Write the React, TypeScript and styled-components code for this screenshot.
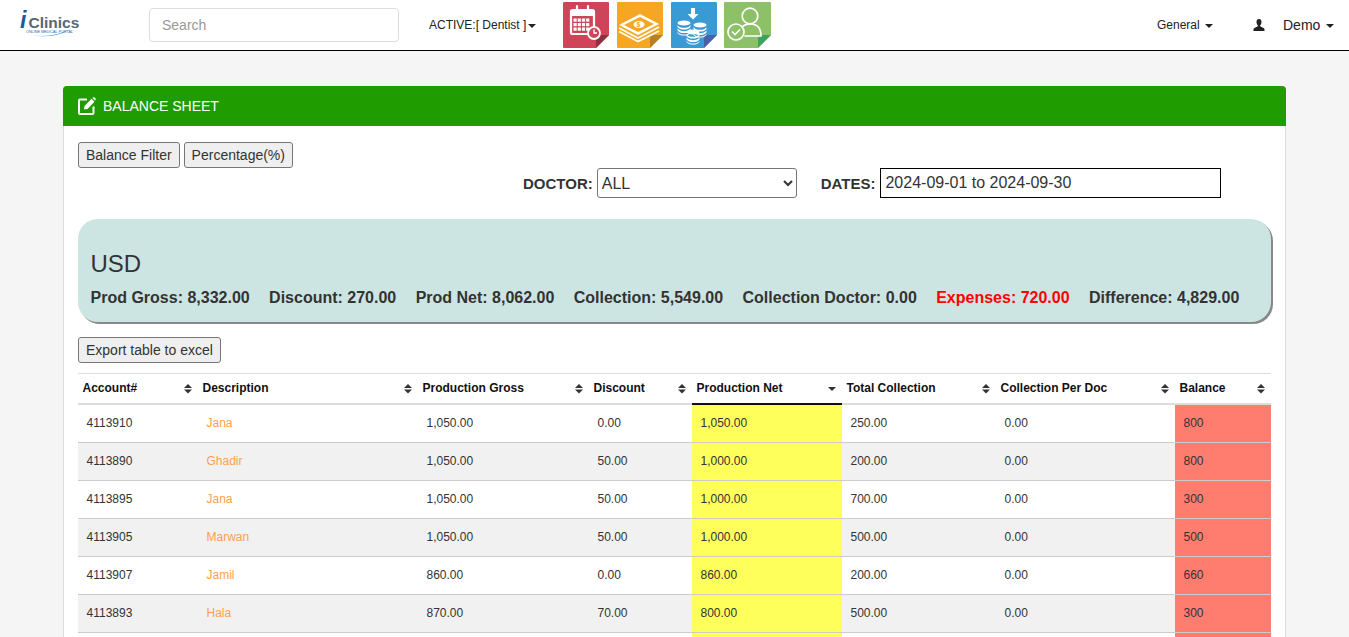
import styled, { createGlobalStyle } from "styled-components";

const GlobalStyle = createGlobalStyle`
  html, body {
    margin: 0;
    height: 100%;
    overflow: hidden;
    background: #f5f5f5;
    font-family: "Liberation Sans", Arial, sans-serif;
    font-size: 14px;
    color: #333;
  }
`;

const Page = styled.div`
  height: 637px;
  overflow: hidden;
`;

const NavBar = styled.nav`
  height: 50px;
  background: #fff;
  border-bottom: 1px solid #000;
  display: flex;
  align-items: center;
`;

const LogoWrap = styled.a`
  width: 149px;
  height: 50px;
  flex: none;
  display: block;
  padding: 8px 0 0 19px;
  box-sizing: border-box;
`;

const Search = styled.input`
  width: 250px;
  height: 34px;
  box-sizing: border-box;
  padding: 6px 12px;
  border: 1px solid #ddd;
  border-radius: 4px;
  font: 14px "Liberation Sans", Arial, sans-serif;
  color: #555;
  background: #fff;

  &::placeholder {
    color: #999;
    opacity: 1;
  }
`;

const ActiveMenu = styled.a`
  margin-left: 30px;
  width: 133px;
  flex: none;
  font-size: 12px;
  color: #222;
  white-space: nowrap;
`;

const Caret = styled.span`
  display: inline-block;
  margin-left: 2px;
  vertical-align: middle;
  border-top: 4px solid #222;
  border-left: 4px solid transparent;
  border-right: 4px solid transparent;
`;

const Tiles = styled.div`
  display: flex;
  align-items: center;
  gap: 7px;
  height: 50px;
  padding-bottom: 1px;
  box-sizing: border-box;
  flex: 1;

  > svg:last-child {
    margin-left: -1px;
  }
`;

const UserMenus = styled.div`
  display: flex;
  align-items: center;
`;

const GeneralLink = styled.a`
  font-size: 12px;
  color: #222;
  width: 96px;
`;

const DemoLink = styled.a`
  display: flex;
  align-items: center;
  width: 96px;
  color: #222;
  font-size: 14px;
`;

const DemoName = styled.span`
  margin-left: 18px;
  white-space: nowrap;
`;

const Panel = styled.section`
  margin: 35px 63px 0;
  background: #fff;
  border: 1px solid #ddd;
  border-top: 0;
  border-radius: 4px 4px 0 0;
`;

const PanelHeading = styled.header`
  height: 40px;
  margin: 0 -1px;
  background: #1f9c00;
  border-radius: 4px 4px 0 0;
  display: flex;
  align-items: center;
  gap: 7px;
  padding-left: 15px;
  color: #fff;
  font-size: 14px;
`;

const PanelBody = styled.div`
  padding: 16px 14px 0;
`;

const ButtonRow = styled.div`
  display: flex;
  gap: 4px;
  height: 26px;
`;

const PlainButton = styled.button`
  height: 26px;
  padding: 0 7px;
  background: #efefef;
  border: 1px solid #767676;
  border-radius: 3px;
  font: 14px "Liberation Sans", Arial, sans-serif;
  color: #333;
`;

const FilterRow = styled.div`
  display: flex;
  align-items: center;
  height: 30px;
  padding-left: 445px;
`;

const FilterLabel = styled.label`
  font-weight: 700;
  font-size: 15px;
  line-height: 17px;
  color: #333;
  margin-right: 4px;
`;

const DoctorSelect = styled.select`
  width: 200px;
  height: 30px;
  margin-right: 24px;
  background: #fff;
  border: 1px solid #767676;
  border-radius: 3px;
  font: 16px "Liberation Sans", Arial, sans-serif;
  color: #333;
`;

const DatesInput = styled.input`
  width: 341px;
  height: 30px;
  margin-left: 1px;
  box-sizing: border-box;
  padding: 0 4px;
  border: 1px solid #000;
  font: 16px "Liberation Sans", Arial, sans-serif;
  color: #333;
`;

const Summary = styled.div`
  margin-top: 21px;
  height: 103px;
  box-sizing: border-box;
  padding: 31px 13px 0 12.500px;
  background: #cde5e2;
  border-radius: 20px;
  box-shadow: 2px 2px 0 #888;
`;

const Currency = styled.div`
  font-size: 24px;
  line-height: 28px;
  color: #333;
`;

const Totals = styled.div`
  display: flex;
  gap: 19.4px;
  margin-top: 11px;
`;

const Total = styled.span<{ $alert?: boolean }>`
  font-size: 16px;
  line-height: 18px;
  font-weight: 700;
  color: ${({ $alert }) => ($alert ? "#f00" : "#333")};
  white-space: nowrap;
`;

const ExportRow = styled.div`
  margin: 15px 0 10px;
`;

const Table = styled.table`
  width: 1193px;
  table-layout: fixed;
  border-collapse: collapse;
  font-size: 12px;
`;

const HeadCell = styled.th<{ $width: number; $sorted?: boolean }>`
  position: relative;
  width: ${({ $width }) => $width}px;
  height: 30px;
  box-sizing: border-box;
  padding: 0 5px 1px 4.500px;
  text-align: left;
  font-weight: 700;
  color: #111;
  border-top: 1px solid #ddd;
  border-bottom: 2px solid ${({ $sorted }) => ($sorted ? "#111" : "#ddd")};
`;

const SortIcon = styled.svg`
  position: absolute;
  right: 6px;
  top: 10px;
`;

const Row = styled.tr<{ $odd: boolean }>`
  background: ${({ $odd }) => ($odd ? "#f1f1f1" : "#fff")};
`;

const Cell = styled.td<{ $tone?: "net" | "balance" }>`
  height: 38px;
  box-sizing: border-box;
  padding: 0 8px 2px 8.500px;
  color: #333;
  border-bottom: 1px solid #ccc;
  background: ${({ $tone }) =>
    $tone === "net" ? "#ffff5c" : $tone === "balance" ? "#ff7d6f" : "transparent"};

  tr:first-child > & {
    height: 39px;
    padding-bottom: 1px;
  }
`;

const PatientLink = styled.a`
  color: #ffa04d;
`;

const Logo = () => (
  <svg width="66" height="32" viewBox="0 -4 66 32">
    <text x="1" y="16" fontFamily="Liberation Sans, sans-serif" fontSize="23" fontWeight="700" fontStyle="italic" fill="#1b5a9b">
      i
    </text>
    <text x="9.500" y="16" fontFamily="Liberation Sans, sans-serif" fontSize="15.500" fontWeight="700" fill="#566676">
      Clinics
    </text>
    <text x="7" y="20.500" fontFamily="Liberation Sans, sans-serif" fontSize="4" textLength="47" lengthAdjust="spacingAndGlyphs" fill="#1f5fb0">
      ONLINE MEDICAL PORTAL
    </text>
    <path d="M14 23.500C30 26 50 23 61 8C52 21 32 25.500 14 23.500Z" fill="#2d8fdc" />
  </svg>
);

const Tile = ({ color, fold, children, width = 47 }: { color: string; fold: string; children: React.ReactNode; width?: number }) => (
  <svg width={width} height="48" viewBox={`0 0 ${width} 48`}>
    <path d={`M2 1H${width - 1}a1 1 0 0 1 1 1V34L${width - 13} 47H2a1 1 0 0 1-1-1V2a1 1 0 0 1 1-1Z`} fill={color} />
    <path d={`M${width} 34H${width - 9}a4 4 0 0 0-4 4V47Z`} fill={fold} />
    {children}
  </svg>
);

const CalendarTile = () => (
  <Tile color="#cf4459" fold="#8f2f3f">
    <g fill="none" stroke="#fff">
      <rect x="9" y="9" width="23" height="24" rx="1.500" strokeWidth="2.200" />
      <path d="M15 5v6M26 5v6" strokeWidth="2.200" strokeLinecap="round" />
    </g>
    <rect x="9" y="9" width="23" height="6" fill="#fff" />
    <g fill="#fff">
      {[17.500, 22, 26.500].map((y) =>
        [11.500, 15.700, 19.900, 24.100].map((x) => <rect key={`${x}-${y}`} x={x} y={y} width="3.200" height="3.200" />)
      )}
    </g>
    <circle cx="32" cy="32" r="6" fill="#cf4459" stroke="#fff" strokeWidth="1.800" />
    <path d="M32 28.500V32h3" fill="none" stroke="#fff" strokeWidth="1.400" />
  </Tile>
);

const CashTile = () => (
  <Tile color="#f5a623" fold="#b57f2b">
    <path d="M3 24 24 13 43 23 22 34Z" fill="#fff" />
    <path d="M8 24 24 16 38 23 22 31Z" fill="#f5a623" />
    <ellipse cx="23" cy="23.500" rx="5.500" ry="3.600" fill="#fff" />
    <text x="20.500" y="26.200" fontFamily="Liberation Sans, sans-serif" fontSize="7" fontWeight="700" fill="#f5a623">
      $
    </text>
    <path d="M3 27 22 37 43 26M3 30.500 22 40.500 43 30" fill="none" stroke="#fff" strokeWidth="1.800" />
  </Tile>
);

const Coin = ({ x, y }: { x: number; y: number }) => (
  <g fill="#fff">
    <ellipse cx={x} cy={y} rx="6.500" ry="2.600" />
    <path d={`M${x - 6.500} ${y + 2.200}c2 3.400 11 3.400 13 0v1.800c-2 3.400-11 3.400-13 0Z`} />
    <path d={`M${x - 6.500} ${y + 5.600}c2 3.400 11 3.400 13 0v1.800c-2 3.400-11 3.400-13 0Z`} />
    <path d={`M${x - 6.500} ${y + 9}c2 3.400 11 3.400 13 0v1c-2 3.400-11 3.400-13 0Z`} />
  </g>
);

const CoinsTile = () => (
  <Tile color="#3a9ad3" fold="#4a60a8">
    <path d="M21 7h4v6h3.500L23 18.500 17.500 13H21Z" fill="#fff" />
    <Coin x={14} y={22} />
    <Coin x={30} y={24} />
    <Coin x={23} y={31} />
  </Tile>
);

const PatientTile = () => (
  <Tile color="#8cc167" fold="#3fa35c" width={48}>
    <g fill="none" stroke="#fff" strokeWidth="1.700">
      <circle cx="27" cy="15" r="7.800" />
      <path d="M19 26c2-2 5-3 8-3 7 0 11 4 11 12H22" strokeLinecap="round" />
      <circle cx="13" cy="31" r="8" />
      <path d="M9.500 31l2.500 2.500 4.500-4.500" strokeLinecap="round" />
    </g>
  </Tile>
);

const EditIcon = () => (
  <svg width="18" height="18" viewBox="0 0 18 18">
    <path d="M9 2.500H2a1 1 0 0 0-1 1V16a1 1 0 0 0 1 1h12.500a1 1 0 0 0 1-1V9.500" fill="none" stroke="#fff" strokeWidth="2" />
    <path d="M6.500 9 13.500 1.800l3 3L9.500 12l-3.500.600ZM14.500 1l.800-.600a1 1 0 0 1 1.300 0l1 1a1 1 0 0 1 0 1.300l-.600.800Z" fill="#fff" />
  </svg>
);

const UserIcon = () => (
  <svg width="12" height="12" viewBox="0 0 12 12">
    <path d="M6 0C4.300 0 3.500 1.200 3.500 3c0 1.500.7 2.800 1.300 3.300v1L1 9.200C.5 9.500.5 10.500.5 12h11c0-1.500 0-2.500-.5-2.800L7.200 7.300v-1C7.800 5.800 8.500 4.500 8.500 3 8.500 1.200 7.700 0 6 0Z" fill="#222" />
  </svg>
);

const columns = [
  { label: "Account#", width: 120 },
  { label: "Description", width: 220 },
  { label: "Production Gross", width: 171 },
  { label: "Discount", width: 103 },
  { label: "Production Net", width: 150, sorted: true },
  { label: "Total Collection", width: 154 },
  { label: "Collection Per Doc", width: 179 },
  { label: "Balance", width: 96 },
];

const rows = [
  ["4113910", "Jana", "1,050.00", "0.00", "1,050.00", "250.00", "0.00", "800"],
  ["4113890", "Ghadir", "1,050.00", "50.00", "1,000.00", "200.00", "0.00", "800"],
  ["4113895", "Jana", "1,050.00", "50.00", "1,000.00", "700.00", "0.00", "300"],
  ["4113905", "Marwan", "1,050.00", "50.00", "1,000.00", "500.00", "0.00", "500"],
  ["4113907", "Jamil", "860.00", "0.00", "860.00", "200.00", "0.00", "660"],
  ["4113893", "Hala", "870.00", "70.00", "800.00", "500.00", "0.00", "300"],
  // the next row starts right at the bottom of the window, only its colours show
  ["", "", "", "", "", "", "", ""],
];

const totals = [
  "Prod Gross: 8,332.00",
  "Discount: 270.00",
  "Prod Net: 8,062.00",
  "Collection: 5,549.00",
  "Collection Doctor: 0.00",
];

const App = () => (
  <Page>
    <GlobalStyle />
    <NavBar>
      <LogoWrap>
        <Logo />
      </LogoWrap>
      <Search placeholder="Search" />
      <ActiveMenu>
        ACTIVE:[ Dentist ]
        <Caret />
      </ActiveMenu>
      <Tiles>
        <CalendarTile />
        <CashTile />
        <CoinsTile />
        <PatientTile />
      </Tiles>
      <UserMenus>
        <GeneralLink>
          General <Caret />
        </GeneralLink>
        <DemoLink>
          <UserIcon />
          <DemoName>
            Demo <Caret />
          </DemoName>
        </DemoLink>
      </UserMenus>
    </NavBar>

    <Panel>
      <PanelHeading>
        <EditIcon />
        BALANCE SHEET
      </PanelHeading>
      <PanelBody>
        <ButtonRow>
          <PlainButton>Balance Filter</PlainButton>
          <PlainButton>Percentage(%)</PlainButton>
        </ButtonRow>
        <FilterRow>
          <FilterLabel>DOCTOR:</FilterLabel>
          <DoctorSelect defaultValue="ALL">
            <option>ALL</option>
          </DoctorSelect>
          <FilterLabel>DATES:</FilterLabel>
          <DatesInput defaultValue="2024-09-01 to 2024-09-30" />
        </FilterRow>
        <Summary>
          <Currency>USD</Currency>
          <Totals>
            {totals.map((t) => (
              <Total key={t}>{t}</Total>
            ))}
            <Total $alert>Expenses: 720.00</Total>
            <Total>Difference: 4,829.00</Total>
          </Totals>
        </Summary>
        <ExportRow>
          <PlainButton>Export table to excel</PlainButton>
        </ExportRow>
        <Table>
          <thead>
            <tr>
              {columns.map((c) => (
                <HeadCell key={c.label} $width={c.width} $sorted={c.sorted}>
                  {c.label}
                  <SortIcon width="8" height="10" viewBox="0 0 8 10">
                    {c.sorted ? (
                      <path d="M0 3H8L4 7Z" fill="#333" />
                    ) : (
                      <>
                        <path d="M4 0 8 4H0Z" fill="#333" />
                        <path d="M0 5.500H8L4 9.500Z" fill="#333" />
                      </>
                    )}
                  </SortIcon>
                </HeadCell>
              ))}
            </tr>
          </thead>
          <tbody>
            {rows.map((r, i) => (
              <Row key={`${r[0]}-${i}`} $odd={i % 2 === 1}>
                <Cell>{r[0]}</Cell>
                <Cell>
                  <PatientLink>{r[1]}</PatientLink>
                </Cell>
                <Cell>{r[2]}</Cell>
                <Cell>{r[3]}</Cell>
                <Cell $tone="net">{r[4]}</Cell>
                <Cell>{r[5]}</Cell>
                <Cell>{r[6]}</Cell>
                <Cell $tone="balance">{r[7]}</Cell>
              </Row>
            ))}
          </tbody>
        </Table>
      </PanelBody>
    </Panel>
  </Page>
);

export default App;
